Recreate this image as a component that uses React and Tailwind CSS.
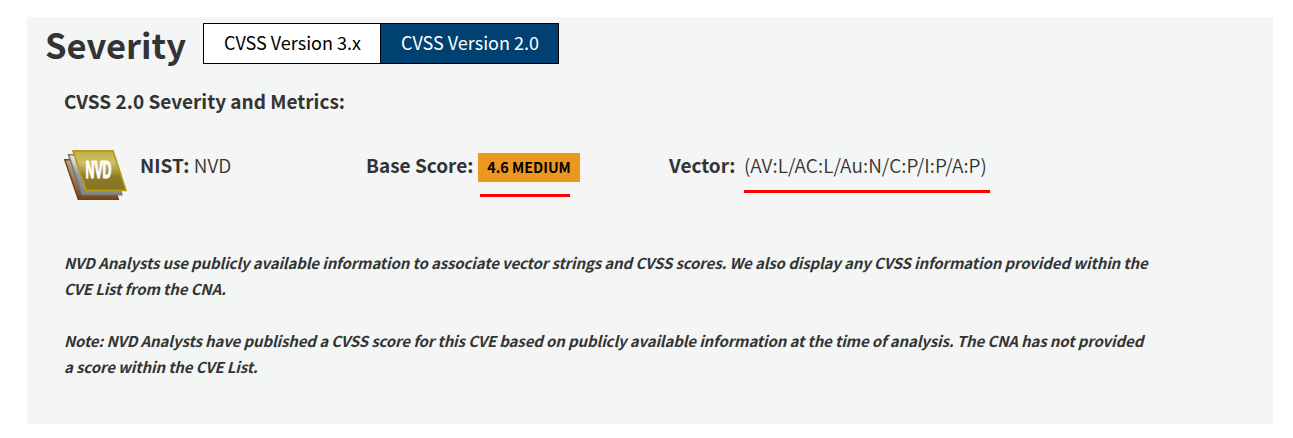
function NvdLogo() {
  return (
    <svg width="64" height="52" viewBox="0 0 64 52" className="block shrink-0 overflow-visible">
      <defs>
        <linearGradient id="gold" x1="0" y1="0" x2="0" y2="1">
          <stop offset="0" stopColor="#c2b044" />
          <stop offset="0.3" stopColor="#cdc06a" />
          <stop offset="0.65" stopColor="#8d7c26" />
          <stop offset="1" stopColor="#857420" />
        </linearGradient>
        <linearGradient id="bronze" x1="0" y1="0" x2="0" y2="1">
          <stop offset="0" stopColor="#c0a890" />
          <stop offset="1" stopColor="#70481f" />
        </linearGradient>
        <linearGradient id="silver" x1="0" y1="0" x2="0" y2="1">
          <stop offset="0" stopColor="#eeeeee" />
          <stop offset="0.5" stopColor="#999999" />
          <stop offset="1" stopColor="#858585" />
        </linearGradient>
      </defs>
      <path d="M0.800 10.700H41L54.300 50.200H14.300Z" fill="url(#bronze)" stroke="#76420f" strokeWidth="1.500" />
      <path d="M4.500 5.700H45L57.800 45.700H18Z" fill="url(#silver)" stroke="#777777" strokeWidth="1.500" />
      <path d="M9 1.900H49L62 41.400H22.300Z" fill="url(#gold)" stroke="#b19a18" strokeWidth="1.600" />
      <g fill="#fff" stroke="#fff" strokeWidth="1.200" fontFamily="Liberation Sans Narrow, Liberation Sans" fontWeight="700" fontSize="24">
        <text x="21.500" y="29.400" textLength="26" lengthAdjust="spacingAndGlyphs">NVD</text>
      </g>
    </svg>
  );
}

export default function App() {
  return (
    <main className="h-[438px] bg-white px-[27px] pt-[17px] font-['Noto_Sans_CJK_SC','Noto_Sans',sans-serif] text-[#333333] whitespace-nowrap">
      <section className="h-[407px] w-[1246px] bg-[#f4f6f5] pt-[6px]">
        <header className="flex h-[41px] pl-[18px]">
          <h2 className="w-[158px] text-[34.500px] leading-[42px] font-bold">Severity</h2>
          <div className="flex h-[41px] border border-black text-[18px] leading-[37px]">
            <button className="w-[177px] border-r border-black bg-white pb-[2px] pl-px text-black">CVSS Version 3.x</button>
            <button className="w-[177px] bg-[#004171] pb-[2px] pl-px text-white">CVSS Version 2.0</button>
          </div>
        </header>

        <h3 className="mt-[23px] pl-[37px] text-[19px] leading-[28px] font-bold">CVSS 2.0 Severity and Metrics:</h3>

        <div className="mt-[34px] flex h-[51px] pl-[37px] text-[19px] leading-[32px]">
          <NvdLogo />
          <div className="ml-[12px] w-[226px]">
            <strong>NIST:</strong> <span className="font-[350]">NVD</span>
          </div>
          <div className="flex w-[303px]">
            <strong className="w-[112px]">Base Score:</strong>
            <div className="pt-[4px]">
              <div className="h-[29px] w-[102px] bg-[#ec9720] text-center text-[14.300px] leading-[28px] font-bold text-black">4.6 MEDIUM</div>
              <div className="mt-[12px] ml-[2px] h-[3px] w-[90px] bg-[#ff0000]" />
            </div>
          </div>
          <div className="flex">
            <strong className="w-[75px]">Vector:</strong>
            <div>
              <div className="font-[350] tracking-[0.07px]">(AV:L/AC:L/Au:N/C:P/I:P/A:P)</div>
              <div className="mt-[9px] h-[3px] w-[246px] bg-[#ff0000]" />
            </div>
          </div>
        </div>

        <div className="mt-[50px] pl-[37px] text-[15px] leading-[26px] font-bold tracking-[-0.125px] italic">
          <p>
            NVD Analysts use publicly available information to associate vector strings and CVSS scores. We also display any CVSS information provided within the
            <br />
            CVE List from the CNA.
          </p>
          <p className="mt-[26px]">
            Note: NVD Analysts have published a CVSS score for this CVE based on publicly available information at the time of analysis. The CNA has not provided
            <br />a score within the CVE List.
          </p>
        </div>
      </section>
    </main>
  );
}
